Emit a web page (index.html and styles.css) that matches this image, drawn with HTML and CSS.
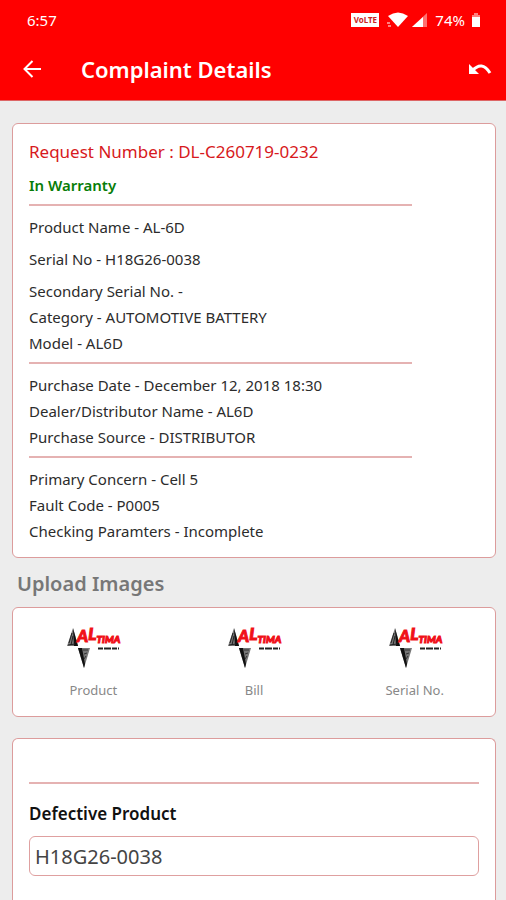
FILE: index.html
```html
<!DOCTYPE html>
<html lang="en">
<head>
<meta charset="utf-8">
<meta name="viewport" content="width=device-width, initial-scale=1">
<title>Complaint Details</title>
<link rel="stylesheet" href="styles.css">
</head>
<body>
<svg width="0" height="0" class="defs" aria-hidden="true">
  <defs>
    <g id="emblem">
      <path d="M6 7 L11 25 L0 25 Z" fill="#777"/>
      <path d="M6 7 L11 25 L7 25 Z" fill="#111"/>
      <path d="M5 12 L2 22 M6 15 L4 24 M1 24 L8 23" stroke="#222" fill="none"/>
      <path d="M11 27 L23 27 L17 47 Z" fill="#777"/>
      <path d="M11 27 L15 27 L18 43 L17 47 Z" fill="#111"/>
      <path d="M16 29 L21 29 M17 33 L20 32 M17 38 L19 35" stroke="#333" fill="none"/>
      <path d="M31 27.500 H52" stroke="#222" stroke-width="2" stroke-dasharray="5 1 7 1"/>
    </g>
  </defs>
</svg>
<header class="top">
  <div class="status">
    <span>6:57</span>
    <div class="status-icons">
      <span class="volte">VoLTE</span>
      <svg class="wifi" width="21" height="16" viewBox="0 0 21 16" aria-hidden="true"><path d="M1 4 Q11 -3 21 4 L11 15 Z" fill="#fff"/><path d="M0 11 H3 M1 14 H4" stroke="#fff"/></svg>
      <svg class="signal" width="15" height="14" viewBox="0 0 15 14" aria-hidden="true"><path d="M0 14 L15 0 V14 Z" fill="#ff7070"/><path d="M0 14 L11 4 V14 Z" fill="#fff"/></svg>
      <span class="percent">74%</span>
      <svg width="8" height="14" viewBox="0 0 8 14" aria-hidden="true"><path d="M2 0 H6 V2 H8 V14 H0 V2 H2 Z" fill="#fff"/><path d="M2 0 H6 V2 H8 V4 H0 V2 H2 Z" fill="#ff8080"/></svg>
    </div>
  </div>
  <div class="bar">
    <button class="icon" aria-label="Back"><svg width="18" height="18" viewBox="0 0 18 18"><path d="M9.500 1 L1.500 9 L9.500 17 M1.500 9 H18" fill="none" stroke="#fff" stroke-width="2"/></svg></button>
    <h1>Complaint Details</h1>
    <button class="icon" aria-label="Undo"><svg width="24" height="12" viewBox="0 0 24 12"><path d="M1 1 V11 H11 Z" fill="#fff"/><path d="M4 8 Q14 -3 22 10" fill="none" stroke="#fff" stroke-width="3"/></svg></button>
  </div>
</header>
<main>
  <section class="card details">
    <h2>Request Number : DL-C260719-0232</h2>
    <p class="warranty">In Warranty</p>
    <hr>
    <p class="spaced">Product Name - AL-6D</p>
    <p class="spaced">Serial No - H18G26-0038</p>
    <p>Secondary Serial No. -</p>
    <p>Category - AUTOMOTIVE BATTERY</p>
    <p>Model - AL6D</p>
    <hr>
    <p>Purchase Date - December 12, 2018 18:30</p>
    <p>Dealer/Distributor Name - AL6D</p>
    <p>Purchase Source - DISTRIBUTOR</p>
    <hr>
    <p>Primary Concern - Cell 5</p>
    <p>Fault Code - P0005</p>
    <p>Checking Paramters - Incomplete</p>
  </section>
  <h2 class="heading">Upload Images</h2>
  <section class="card uploads">
    <button class="upload">
      <svg class="logo" width="52" height="48" viewBox="0 0 52 48"><use href="#emblem"/><text x="10" y="21"><tspan class="tall">A<tspan dy="-2">L</tspan></tspan><tspan class="short" dy="3">TIMA</tspan></text></svg>
      <span>Product</span>
    </button>
    <button class="upload">
      <svg class="logo" width="52" height="48" viewBox="0 0 52 48"><use href="#emblem"/><text x="10" y="21"><tspan class="tall">A<tspan dy="-2">L</tspan></tspan><tspan class="short" dy="3">TIMA</tspan></text></svg>
      <span>Bill</span>
    </button>
    <button class="upload">
      <svg class="logo" width="52" height="48" viewBox="0 0 52 48"><use href="#emblem"/><text x="10" y="21"><tspan class="tall">A<tspan dy="-2">L</tspan></tspan><tspan class="short" dy="3">TIMA</tspan></text></svg>
      <span>Serial No.</span>
    </button>
  </section>
  <section class="card form">
    <hr>
    <label for="defective">Defective Product</label>
    <input id="defective" type="text" value="H18G26-0038">
  </section>
</main>
</body>
</html>
```
FILE: styles.css
```css
* { box-sizing: border-box; }
body {
  display: flex;
  flex-direction: column;
  min-height: 100vh;
  margin: 0;
  background: #ededed;
  color: #2c2c2c;
  font: 15px/26px "Noto Sans", "Open Sans", sans-serif;
}
h1, h2, p { margin: 0; }
button { padding: 0; border: 0; background: none; font: inherit; }
.defs { position: absolute; }

.top { background: #f00; color: #fff; border-bottom: 1px solid #d66; }
.status {
  display: flex;
  justify-content: space-between;
  align-items: center;
  height: 40px;
  padding: 0 26px 0 27px;
}
.status-icons { display: flex; align-items: center; }
.volte {
  width: 28px;
  height: 14px;
  background: #fff;
  color: #c22;
  font-size: 8px;
  font-weight: 700;
  line-height: 14px;
  text-align: center;
}
.wifi { margin-left: 8px; }
.signal { margin-left: 4px; }
.percent { margin: 0 7px 0 8px; }
.bar { display: flex; align-items: center; height: 60px; padding: 0 14px 2px 23px; }
.bar h1 { flex: 1; margin-left: 40px; font-size: 22px; font-weight: 600; line-height: 30px; }
.icon { display: flex; }

main { display: flex; flex-direction: column; flex: 1; padding: 22px 10px 0 12px; }
.card { background: #fff; border: 1px solid #dc9c9c; border-radius: 6px; padding: 15px 16px; }
hr { height: 2px; margin: 0; border: 0; background: #e5b2b2; }
.details { padding-bottom: 13px; }
.details h2 { color: #d71920; font-size: 17px; font-weight: 400; }
.details hr { width: 85%; margin: 6px 0 8px; }
.details .warranty { margin-top: 7px; color: #087d08; font-weight: 600; }
.details .spaced { margin-bottom: 6px; }
.heading { padding: 0 5px; margin: 13px 0 10px; color: #777; font-size: 20px; font-weight: 600; }

.uploads { display: grid; grid-template-columns: repeat(3, 1fr); padding: 13px 0; }
.upload { display: flex; flex-direction: column; align-items: center; gap: 8px; color: #888; font-size: 13px; }
.logo { display: block; overflow: visible; }
.logo text { fill: #f01018; stroke: #f01018; stroke-width: 1px; font-family: Lato, "Liberation Sans", sans-serif; font-weight: 900; font-style: italic; }
.logo .tall { font-size: 17px; }
.logo .short { font-size: 10px; }

.form { flex: 1; margin-top: 21px; padding-top: 43px; border-bottom: 0; border-radius: 6px 6px 0 0; }
.form label { display: block; margin: 17px 0 9px; color: #111; font-size: 17px; font-weight: 600; }
.form input {
  width: 100%;
  height: 40px;
  padding: 0 5px;
  border: 1px solid #dfa0a0;
  border-radius: 6px;
  background: #fff;
  color: #444;
  font: 20px "Noto Sans", "Open Sans", sans-serif;
}
```
